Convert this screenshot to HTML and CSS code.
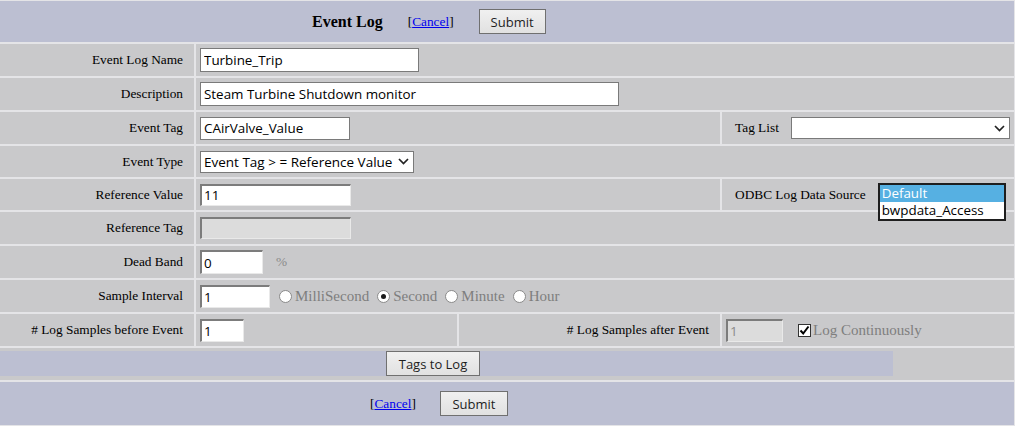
FILE: index.html
```html
<!DOCTYPE html>
<html>
<head>
<meta charset="utf-8">
<title>Event Log</title>
<link rel="stylesheet" href="styles.css">
</head>
<body>
<div class="form">
  <div class="band head">
    <span class="title">Event Log</span>
    <span class="cancel">[<a href="#">Cancel</a>]</span>
    <button class="btn submit-top">Submit</button>
  </div>

  <div class="row">
    <div class="lbl">Event Log Name</div>
    <div class="val"><input class="txt w-name" value="Turbine_Trip"></div>
  </div>

  <div class="row">
    <div class="lbl">Description</div>
    <div class="val"><input class="txt w-desc" value="Steam Turbine Shutdown monitor"></div>
  </div>

  <div class="row">
    <div class="lbl">Event Tag</div>
    <div class="val mid"><input class="txt w-tag" value="CAirValve_Value"></div>
    <div class="val side">
      <span class="side-lbl">Tag List</span>
      <div class="select w-taglist"><span></span>
        <svg class="chev" width="11" height="7" viewBox="0 0 11 7"><path d="M1 1 L5.5 5.5 L10 1" fill="none" stroke="#222" stroke-width="1.7"/></svg>
      </div>
    </div>
  </div>

  <div class="row short">
    <div class="lbl">Event Type</div>
    <div class="val">
      <div class="select w-type"><span>Event Tag &gt; = Reference Value</span>
        <svg class="chev" width="11" height="7" viewBox="0 0 11 7"><path d="M1 1 L5.5 5.5 L10 1" fill="none" stroke="#222" stroke-width="1.7"/></svg>
      </div>
    </div>
  </div>

  <div class="row short">
    <div class="lbl">Reference Value</div>
    <div class="val mid"><input class="inset w-ref" value="11"></div>
    <div class="val side">
      <span class="side-lbl">ODBC Log Data Source</span>
      <div class="listbox">
        <div class="opt-item selected">Default</div>
        <div class="opt-item">bwpdata_Access</div>
      </div>
    </div>
  </div>

  <div class="row">
    <div class="lbl">Reference Tag</div>
    <div class="val"><input class="inset off w-ref" value="" disabled></div>
  </div>

  <div class="row">
    <div class="lbl">Dead Band</div>
    <div class="val"><input class="inset w-dead" value="0"><span class="unit">%</span></div>
  </div>

  <div class="row">
    <div class="lbl">Sample Interval</div>
    <div class="val">
      <input class="inset w-sample" value="1">
      <span class="radios">
        <span class="radio"></span><span class="gray">MilliSecond</span>
        <span class="radio on"></span><span class="gray">Second</span>
        <span class="radio"></span><span class="gray">Minute</span>
        <span class="radio"></span><span class="gray">Hour</span>
      </span>
    </div>
  </div>

  <div class="row">
    <div class="lbl">#&nbsp;Log Samples before Event</div>
    <div class="val half"><input class="inset w-before" value="1"></div>
    <div class="lbl half-lbl">#&nbsp;Log Samples after Event</div>
    <div class="val side tight">
      <input class="inset off w-after" value="1" disabled>
      <span class="check"><svg width="11" height="11" viewBox="0 0 11 11"><path d="M1.5 5.5 L4.2 8.5 L9.5 1.5" fill="none" stroke="#000" stroke-width="2"/></svg></span>
      <span class="gray">Log Continuously</span>
    </div>
  </div>

  <div class="row tags-row">
    <div class="tags-bar"><button class="btn tags-btn">Tags to Log</button></div>
  </div>

  <div class="band foot">
    <span class="cancel">[<a href="#">Cancel</a>]</span>
    <button class="btn submit-bottom">Submit</button>
  </div>
</div>
</body>
</html>
```

FILE: styles.css
```css
html, body {
  margin: 0;
  padding: 0;
  background: #ffffff;
}

.form {
  box-sizing: border-box;
  width: 1015px;
  background: #e4e4e7;
  padding: 1px 1px 1px 0;
  display: flex;
  flex-direction: column;
  gap: 2px;
  font-family: "Liberation Serif", "Times New Roman", serif;
  font-size: 13.33px;
  color: #000;
}

.band {
  background: #bcbfd2;
  display: flex;
  align-items: center;
  box-sizing: border-box;
}

.head {
  height: 41px;
  padding-left: 312px;
}

.foot {
  height: 43px;
  padding-left: 370px;
}

.title {
  font-weight: bold;
  font-size: 16px;
  margin-right: 25px;
}

.cancel a {
  color: #0000ee;
  text-decoration: underline;
}

.head .cancel {
  margin-right: 25px;
}

.foot .cancel {
  margin-right: 24px;
}

.btn {
  font-family: "Open Sans", "Noto Sans", sans-serif;
  font-size: 13px;
  color: #1e1e1e;
  background: linear-gradient(#f0f0f0, #e1e1e1);
  border: 1px solid #707070;
  border-radius: 0;
  padding: 0;
  height: 25px;
  box-sizing: border-box;
}

.submit-top {
  width: 67px;
}

.submit-bottom {
  width: 68px;
}

.row {
  display: flex;
  gap: 2px;
  height: 32px;
}

.row.short {
  height: 31px;
}

.lbl {
  box-sizing: border-box;
  width: 194px;
  flex: none;
  background: #c9c9cb;
  display: flex;
  align-items: center;
  justify-content: flex-end;
  padding-right: 11px;
  white-space: nowrap;
}

.val {
  box-sizing: border-box;
  flex: 1;
  background: #c9c9cb;
  display: flex;
  align-items: center;
  padding-left: 4px;
  white-space: nowrap;
}

.val.mid {
  flex: none;
  width: 524px;
}

.val.half {
  flex: none;
  width: 261px;
}

.lbl.half-lbl {
  width: 261px;
}

.val.side {
  padding-left: 13px;
}

.val.side.tight {
  padding-left: 4px;
}

.side-lbl {
  margin-right: 12px;
}

.txt, .inset {
  box-sizing: border-box;
  font-family: "Open Sans", "Noto Sans", sans-serif;
  font-size: 13.4px;
  color: #000;
  background: #fff;
  padding: 0 3px;
  margin: 0;
  outline: none;
}

.txt {
  border: 1px solid #7a7a7a;
}

.inset {
  border-style: solid;
  border-width: 2px 1px 1px 2px;
  border-color: #7c7c7c #e9e9e9 #e9e9e9 #7c7c7c;
  padding: 0 2px;
  height: 23px;
}

.inset.off {
  background: #dcdcdc;
  color: #8a8a8a;
}

.w-name { width: 219px; height: 24px; }
.w-desc { width: 419px; height: 24px; }
.w-tag { width: 150px; height: 23px; }
.w-ref { width: 151px; height: 22px; }
.w-dead { width: 63px; height: 24px; }
.w-sample { width: 70px; }
.w-before { width: 44px; }
.w-after { width: 57px; }

.select {
  box-sizing: border-box;
  height: 22px;
  border: 1px solid #7a7a7a;
  background: #fff;
  display: flex;
  align-items: center;
  justify-content: space-between;
  padding: 0 4px 0 3px;
  font-family: "Open Sans", "Noto Sans", sans-serif;
  font-size: 13.5px;
}

.w-type { width: 214px; }
.w-taglist { width: 219px; }

.chev {
  flex: none;
}

.listbox {
  position: relative;
  z-index: 1;
  align-self: flex-start;
  margin-top: 4px;
  box-sizing: border-box;
  width: 128px;
  border: 2px solid #1e1e1e;
  background: #fff;
  font-family: "Open Sans", "Noto Sans", sans-serif;
  font-size: 13.4px;
}

.opt-item {
  height: 17px;
  line-height: 17px;
  padding-left: 2px;
}

.opt-item.selected {
  background: #56b0e2;
  color: #fff;
}

.unit {
  color: #8a8a8a;
  margin-left: 13px;
}

.gray {
  color: #7e7e7e;
  font-size: 15px;
}

.radios {
  display: flex;
  align-items: center;
  margin-left: 9px;
}

.radio {
  box-sizing: border-box;
  width: 13px;
  height: 13px;
  border-radius: 50%;
  border: 1px solid #8a8a8a;
  background: #fff;
  margin-right: 3px;
  display: inline-flex;
  align-items: center;
  justify-content: center;
}

.radios .gray {
  margin-right: 8px;
}

.radio.on::after {
  content: "";
  width: 5px;
  height: 5px;
  border-radius: 50%;
  background: #1a1a1a;
}

.check {
  box-sizing: border-box;
  width: 13px;
  height: 13px;
  border: 1px solid #333;
  background: #fff;
  margin-left: 15px;
  margin-right: 2px;
  display: inline-flex;
  align-items: center;
  justify-content: center;
}

.tags-row {
  background: #c9c9cb;
  height: 32px;
  display: block;
  padding-top: 3px;
  box-sizing: border-box;
}

.tags-bar {
  width: 893px;
  height: 25px;
  background: #bcbfd2;
  display: flex;
  align-items: stretch;
  padding-left: 386px;
  box-sizing: border-box;
}

.tags-btn {
  width: 94px;
}
```
